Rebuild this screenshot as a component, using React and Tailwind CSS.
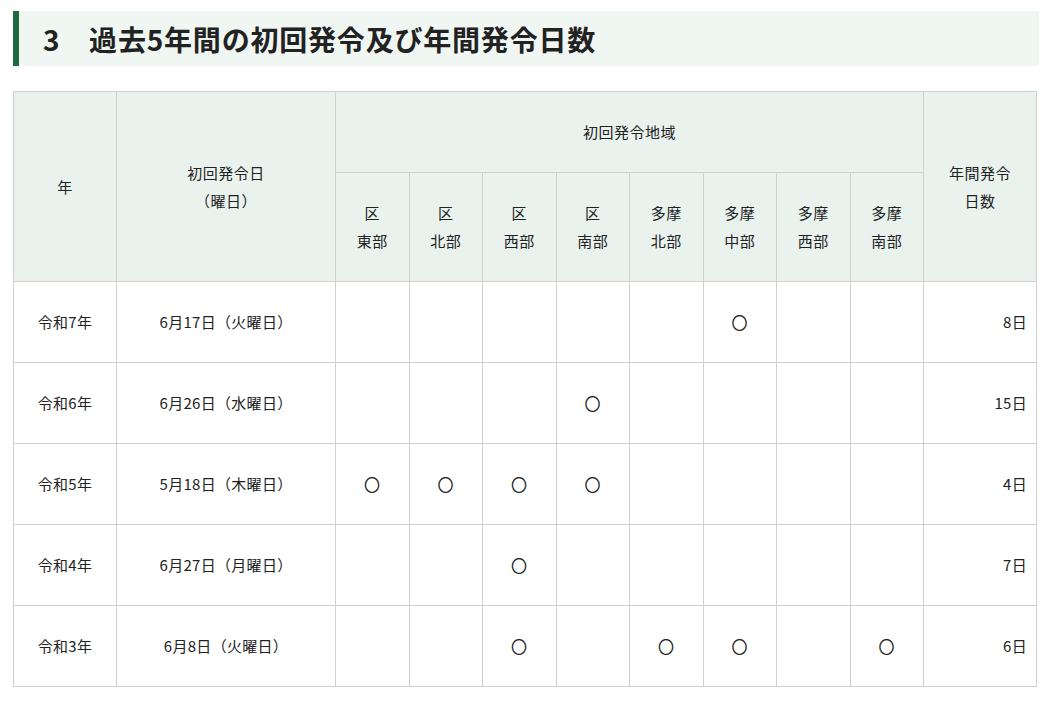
const F = { fontFamily: '"Noto Sans CJK JP", "Noto Sans", sans-serif' };
const regions = [["区", "東部"], ["区", "北部"], ["区", "西部"], ["区", "南部"], ["多摩", "北部"], ["多摩", "中部"], ["多摩", "西部"], ["多摩", "南部"]];
const rows = [
  ["令和7年", "6月17日（火曜日）", [5], "8日"],
  ["令和6年", "6月26日（水曜日）", [3], "15日"],
  ["令和5年", "5月18日（木曜日）", [0, 1, 2, 3], "4日"],
  ["令和4年", "6月27日（月曜日）", [2], "7日"],
  ["令和3年", "6月8日（火曜日）", [2, 4, 5, 7], "6日"],
];

export default function App() {
  const th = "border border-[#d0d0d0] bg-[#e9f2ed] font-normal text-[15px] text-[#222] text-center leading-[28px] tracking-[0.5px]";
  const td = "border border-[#d0d0d0] text-[15px] text-[#222] text-center h-[81px] tracking-[0.3px]";
  return (
    <div style={F} className="bg-white w-[1052px] h-[715px] pt-[11px] px-[13px]">
      <div className="h-[55px] bg-[#f0f6f2] border-l-[6px] border-[#1c6b3c] flex items-center pl-[24px]">
        <h2 className="text-[28px] font-bold text-[#222] tracking-[0.8px]">3　過去5年間の初回発令及び年間発令日数</h2>
      </div>
      <table className="mt-[25px] w-[1023px] border-collapse table-fixed">
        <colgroup>
          <col className="w-[103px]" />
          <col className="w-[219px]" />
          {regions.map((_, i) => <col key={i} className="w-[73.5px]" />)}
          <col className="w-[113px]" />
        </colgroup>
        <thead>
          <tr className="h-[81px]">
            <th rowSpan={2} className={th}>年</th>
            <th rowSpan={2} className={th}>初回発令日<br />（曜日）</th>
            <th colSpan={8} className={th}>初回発令地域</th>
            <th rowSpan={2} className={th}>年間発令<br />日数</th>
          </tr>
          <tr className="h-[109px]">
            {regions.map((r, i) => <th key={i} className={th}>{r[0]}<br />{r[1]}</th>)}
          </tr>
        </thead>
        <tbody>
          {rows.map((r) => (
            <tr key={r[0]}>
              <td className={td}>{r[0]}</td>
              <td className={td}>{r[1]}</td>
              {regions.map((_, i) => <td key={i} className={td + " text-[16px]"}>{r[2].includes(i) ? "〇" : ""}</td>)}
              <td className={td + " !text-right pr-[9px]"}>{r[3]}</td>
            </tr>
          ))}
        </tbody>
      </table>
    </div>
  );
}
